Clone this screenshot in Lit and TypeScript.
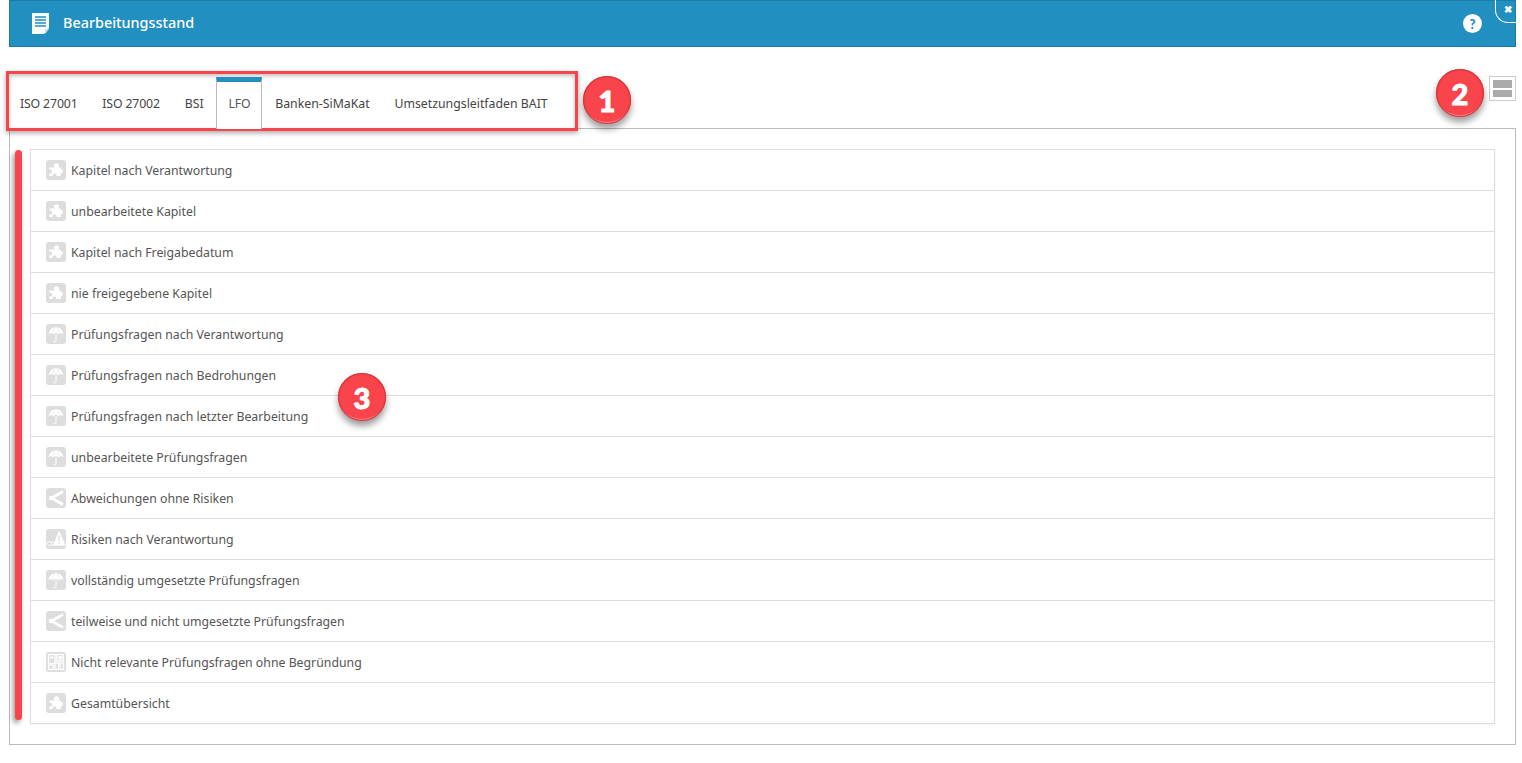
import { LitElement, html, css, svg } from "lit";
import { customElement } from "lit/decorators.js";

const puzzle = svg`<path d="M3.300 7.500H8.700C8.100 6.900 7.800 6.300 7.800 5.600 7.800 4.200 9 3.300 10.500 3.300S13.200 4.200 13.200 5.600C13.200 6.300 12.900 6.900 12.300 7.500H14.800V9.500C15.200 9.100 15.600 8.900 16 8.900 16.500 8.900 16.800 9.800 16.800 11S16.500 13.100 16 13.100C15.600 13.100 15.200 12.900 14.800 12.500V16H10.200C10.400 15.600 10.500 15.300 10.500 15 10.500 14 9.600 13.500 8.500 13.500S6.500 14 6.500 15C6.500 15.300 6.600 15.600 6.800 16H3.300V13.200C3.700 13.500 4.100 13.600 4.500 13.600 5.500 13.600 6.100 12.600 6.100 11.500S5.500 9.400 4.500 9.400C4.100 9.400 3.700 9.500 3.300 9.800Z" fill="#fff"/>`;
const umbrella = svg`<path d="M2.500 10.500C3 6 6.200 3.200 10 3.200s7 2.800 7.500 7.300c-.8-1-1.600-1.500-2.500-1.500s-1.700.5-2.400 1.500c-.6-1-1.500-1.500-2.600-1.500s-2 .5-2.600 1.500C6.700 9.500 5.900 9 5 9s-1.700.5-2.500 1.500z" fill="#fff"/><path d="M7.900 4.500 6.800 9M12.100 4.500l1.100 4.500" stroke="#ddd" stroke-width=".6"/><path d="M10 10v6.500c0 1-.6 1.500-1.300 1.500S7.500 17.500 7.500 16.700" fill="none" stroke="#fff" stroke-width="1"/>`;
const share = svg`<path d="M17 3.500 5.500 10 17 16.500" fill="none" stroke="#fff" stroke-width="2.600"/><circle cx="5" cy="10" r="2.300" fill="#fff"/>`;
const warn = svg`<path d="M13 1.500 19.500 16.500H7z" fill="#fff"/><path d="M13 6.500v5.500M13 13.200v1.500" stroke="#ddd" stroke-width="1.300"/><circle cx="3.500" cy="14.500" r="2.100" fill="none" stroke="#fff" stroke-width=".9"/><circle cx="7" cy="14.500" r="1.700" fill="none" stroke="#fff" stroke-width=".9"/>`;
const grid = svg`<g fill="none" stroke="#fff" stroke-width="1.300"><rect x="2.500" y="2.500" width="6.500" height="9"/><rect x="10.800" y="2.500" width="6.500" height="6.500"/><rect x="2.500" y="13" width="4.500" height="4.500"/><rect x="9" y="11" width="3.500" height="6.500"/><rect x="14" y="11" width="3.500" height="6.500"/></g><path d="M4 4.500h3.500v2H4zM12.500 4h3.500v3.500h-3.500z" fill="#fff"/>`;

const tabs: [string, string][] = [["ISO 27001", "narrow"], ["ISO 27002", "narrow"], ["BSI", ""], ["LFO", "narrow active"], ["Banken-SiMaKat", ""], ["Umsetzungsleitfaden BAIT", ""]];
const rows: [any, string][] = [
  [puzzle, "Kapitel nach Verantwortung"],
  [puzzle, "unbearbeitete Kapitel"],
  [puzzle, "Kapitel nach Freigabedatum"],
  [puzzle, "nie freigegebene Kapitel"],
  [umbrella, "Prüfungsfragen nach Verantwortung"],
  [umbrella, "Prüfungsfragen nach Bedrohungen"],
  [umbrella, "Prüfungsfragen nach letzter Bearbeitung"],
  [umbrella, "unbearbeitete Prüfungsfragen"],
  [share, "Abweichungen ohne Risiken"],
  [warn, "Risiken nach Verantwortung"],
  [umbrella, "vollständig umgesetzte Prüfungsfragen"],
  [share, "teilweise und nicht umgesetzte Prüfungsfragen"],
  [grid, "Nicht relevante Prüfungsfragen ohne Begründung"],
  [puzzle, "Gesamtübersicht"],
];

@customElement("app-root")
export class AppRoot extends LitElement {
  static styles = css`
    :host { display: block; position: relative; height: 763px; overflow: hidden; background: #fff;
      font-family: "Noto Sans", "Lato", sans-serif; color: #555; font-size: 12.3px; }
    .page { padding: 0 6px 0 9px; display: flex; flex-direction: column; }
    .header { height: 47px; box-sizing: border-box; background: #2190c1; border: 1px solid #1a7ba8;
      display: flex; align-items: center; padding-left: 21px; color: #fff; position: relative; }
    .doc { width: 19px; height: 22px; margin-right: 13px; flex: none; }
    .title { font-size: 14.4px; font-weight: 500; flex: 1; position: relative; top: -1px; }
    .help { width: 19px; height: 19px; border-radius: 50%; background: #fff; color: #2190c1; font-weight: 900; font-size: 13px;
      font-family: "Lato", sans-serif; display: flex; align-items: center; justify-content: center; margin-right: 33px; }
    .close { position: absolute; right: -1px; top: -1px; width: 21px; height: 23px; box-sizing: border-box;
      border-left: 1px solid #fff; border-bottom: 1px solid #fff; border-bottom-left-radius: 13px;
      color: #fff; font-size: 10px; font-weight: 900; line-height: 1; display: flex; justify-content: center; padding: 4px 0 0 3px; }
    .toolbar { display: flex; align-items: flex-start; justify-content: space-between; margin-top: 30px; height: 51px; }
    .tabs { display: flex; gap: .8px; height: 52px; position: relative; z-index: 1; margin-left: -1px; }
    .tab { padding: 0 11px; border: 1px solid transparent; border-bottom: 0; display: flex; align-items: center; color: #444;
      box-sizing: border-box; }
    .tab.narrow { letter-spacing: -.15px; }
    .tab.active { background: #fff; border-color: #bbb; border-top: 5px solid #2190c1; color: #555; }
    .tab.active span { position: relative; top: -2px; }
    .view { width: 27px; height: 25px; box-sizing: border-box; border: 1px solid #ccc; padding: 3px; display: flex;
      flex-direction: column; gap: 2px; margin-top: -1px; }
    .view i { display: block; flex: 1; background: #aaa; }
    .panel { border: 1px solid #bbb; padding: 20px; height: 617px; box-sizing: border-box; }
    .list { border: 1px solid #ddd; box-shadow: 0 1px 2px rgba(0,0,0,.05); }
    .row { height: 40px; box-sizing: border-box; display: flex; align-items: center; padding-left: 15px; gap: 5px; }
    .row + .row { height: 41px; border-top: 1px solid #ddd; }
    .ic { width: 20px; height: 20px; border-radius: 3px; background: #ddd; flex: none; display: block; }
    .mark { position: absolute; box-sizing: border-box; }
    .frame { left: 6px; top: 71px; width: 572px; height: 60px; border: 3px solid #f8444a; box-shadow: 0 2px 5px rgba(0,0,0,.35), inset 0 2px 4px rgba(0,0,0,.25); }
    .line { left: 15px; top: 150px; width: 7px; height: 570px; border-radius: 4px; background: #f8444a; box-shadow: -2px 3px 5px rgba(0,0,0,.4); }
    .badge { width: 48px; height: 48px; border-radius: 50%; background: #f8444a; color: #fff; font-family: "Lato", sans-serif;
      font-weight: 900; font-size: 29px; display: flex; align-items: center; justify-content: center; -webkit-text-stroke: 1px #fff;
      box-shadow: 0 5px 7px rgba(0,0,0,.4), inset 0 0 1px 1px #c9343a, inset 0 -3px 0 -1px #ff8a8d; }
    .b1 { left: 583px; top: 76px; }
    .b2 { left: 1436px; top: 69px; }
    .b3 { left: 338px; top: 373px; }
  `;

  render() {
    return html`
      <div class="page">
        <div class="header">
          <svg class="doc" viewBox="0 0 19 22"><path d="M1 0h17v15l-5 6H1z" fill="#fff"/><path d="M4 4h11M4 7h11M4 10h11M4 13h11" stroke="#2190c1" stroke-width="1.400"/><path d="M14 21v-5h4z" fill="#bfe0ef"/></svg>
          <span class="title">Bearbeitungsstand</span>
          <span class="help">?</span>
          <span class="close">✖</span>
        </div>
        <div class="toolbar">
          <div class="tabs">
            ${tabs.map(([t, c]) => html`<div class="tab ${c}"><span>${t}</span></div>`)}
          </div>
          <div class="view"><i></i><i></i></div>
        </div>
        <div class="panel">
          <div class="list">
            ${rows.map(([i, t]) => html`<div class="row"><svg class="ic" viewBox="0 0 20 20">${i}</svg><span>${t}</span></div>`)}
          </div>
        </div>
      </div>
      <div class="mark frame"></div>
      <div class="mark line"></div>
      <div class="mark badge b1">1</div>
      <div class="mark badge b2">2</div>
      <div class="mark badge b3">3</div>
    `;
  }
}
